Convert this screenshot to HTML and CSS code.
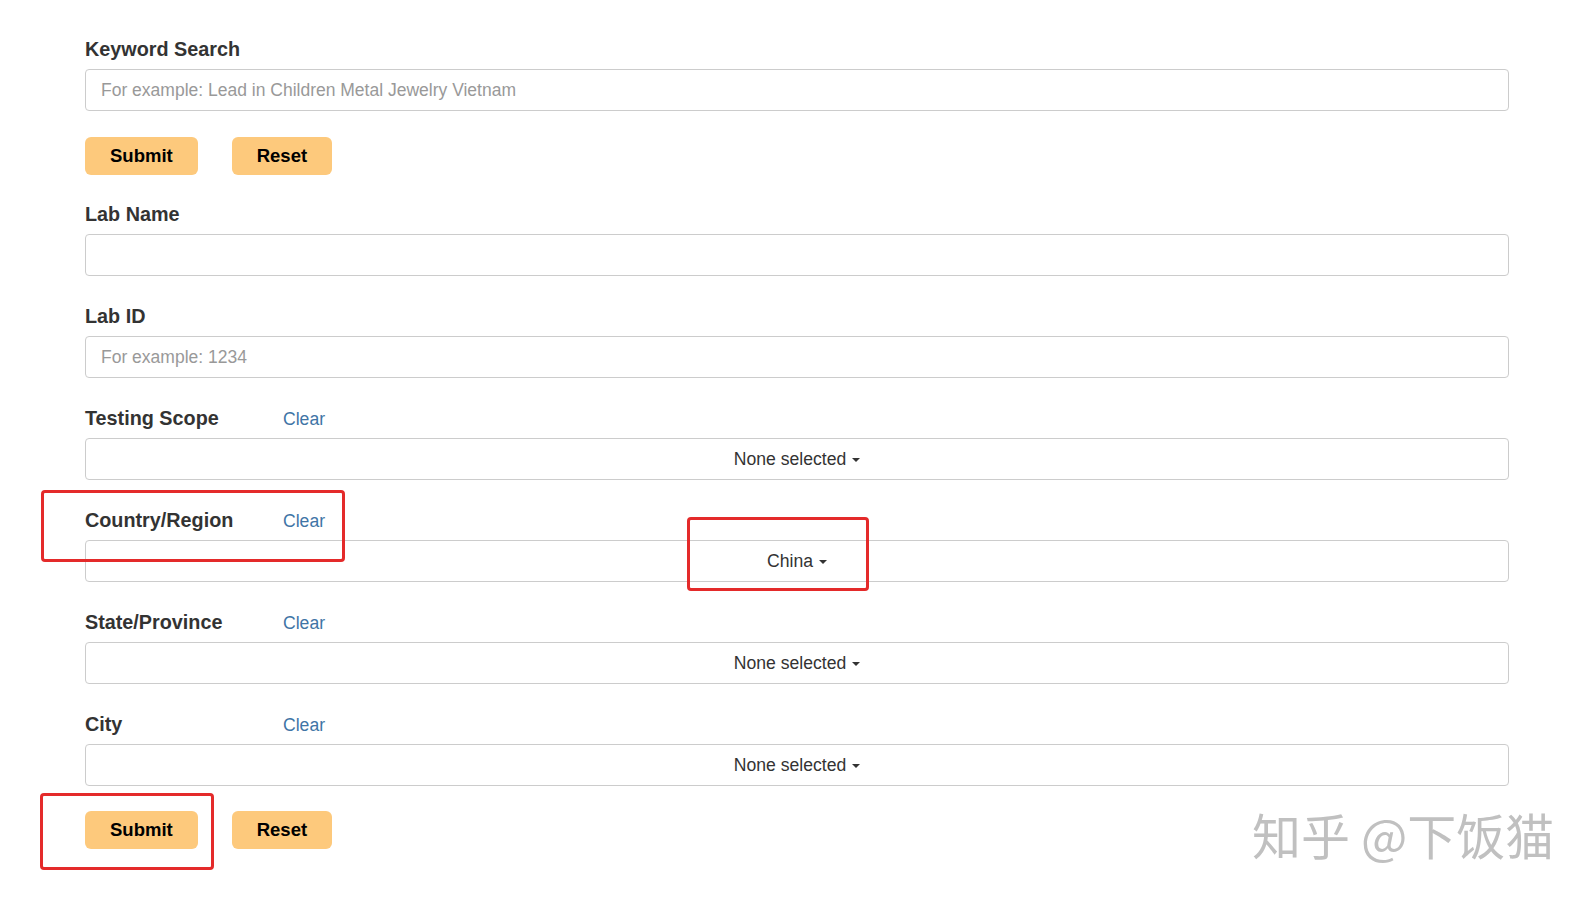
FILE: index.html
```html
<!DOCTYPE html>
<html>
<head>
    <title>Lab Search</title>
    <link rel="stylesheet" href="styles.css">
</head>
<body>
    <div class="page">
        <form class="search-form">
            <div class="group group-tight">
                <div class="label-row"><label>Keyword Search</label></div>
                <input class="field" type="text" placeholder="For example: Lead in Children Metal Jewelry Vietnam">
            </div>
            <div class="actions">
                <button type="button" class="btn-orange">Submit</button>
                <button type="button" class="btn-orange">Reset</button>
            </div>
            <div class="group">
                <div class="label-row"><label>Lab Name</label></div>
                <input class="field" type="text">
            </div>
            <div class="group">
                <div class="label-row"><label>Lab ID</label></div>
                <input class="field" type="text" placeholder="For example: 1234">
            </div>
            <div class="group">
                <div class="label-row"><label>Testing Scope</label><a class="clear" href="#">Clear</a></div>
                <button type="button" class="multiselect">None selected <b class="caret"></b></button>
            </div>
            <div class="group">
                <div class="label-row"><label>Country/Region</label><a class="clear" href="#">Clear</a></div>
                <button type="button" class="multiselect">China <b class="caret"></b></button>
            </div>
            <div class="group">
                <div class="label-row"><label>State/Province</label><a class="clear" href="#">Clear</a></div>
                <button type="button" class="multiselect">None selected <b class="caret"></b></button>
            </div>
            <div class="group group-last">
                <div class="label-row"><label>City</label><a class="clear" href="#">Clear</a></div>
                <button type="button" class="multiselect">None selected <b class="caret"></b></button>
            </div>
            <div class="actions">
                <button type="button" class="btn-orange">Submit</button>
                <button type="button" class="btn-orange">Reset</button>
            </div>
        </form>

        <div class="mark mark-country"></div>
        <div class="mark mark-china"></div>
        <div class="mark mark-submit"></div>
        <div class="watermark">知乎 @下饭猫</div>
    </div>
</body>
</html>
```

FILE: styles.css
```css
body {
    margin: 0;
    padding: 0;
    background-color: #ffffff;
    font-family: "Liberation Sans", Arial, sans-serif;
    color: #333333;
}
.page {
    position: relative;
    width: 1590px;
    height: 900px;
    overflow: hidden;
}
.search-form {
    width: 1424px;
    padding: 36px 0 0 85px;
}
.group {
    margin-bottom: 27px;
}
.group-tight {
    margin-bottom: 26px;
}
.group-last {
    margin-bottom: 25px;
}
.label-row {
    display: flex;
    align-items: baseline;
    height: 26px;
    margin-bottom: 7px;
}
.label-row label {
    width: 198px;
    font-size: 19.8px;
    line-height: 26px;
    font-weight: bold;
    color: #333333;
}
.clear {
    font-size: 17.6px;
    line-height: 26px;
    color: #3f75a6;
    text-decoration: none;
}
.field {
    display: block;
    box-sizing: border-box;
    width: 100%;
    height: 42px;
    padding: 0 15px;
    border: 1px solid #cccccc;
    border-radius: 4px;
    font-family: inherit;
    font-size: 17.5px;
    color: #555555;
    background: #ffffff;
}
.field::placeholder {
    color: #999999;
}
.multiselect {
    display: block;
    box-sizing: border-box;
    width: 100%;
    height: 42px;
    border: 1px solid #cccccc;
    border-radius: 4px;
    background: #ffffff;
    font-family: inherit;
    font-size: 17.6px;
    color: #333333;
    text-align: center;
    padding: 0 12px;
}
.caret {
    display: inline-block;
    width: 0;
    height: 0;
    margin-left: 1px;
    vertical-align: middle;
    border-top: 4px solid #333333;
    border-left: 4px solid transparent;
    border-right: 4px solid transparent;
}
.actions {
    display: flex;
    gap: 34px;
    margin-bottom: 26px;
}
.btn-orange {
    height: 38px;
    padding: 0 25px;
    border: none;
    border-radius: 6px;
    background-color: #fdc97c;
    font-family: inherit;
    font-size: 18.5px;
    font-weight: bold;
    color: #000000;
}
.mark {
    position: absolute;
    box-sizing: border-box;
    border: 3px solid #e42a2a;
    border-radius: 4px;
}
.mark-country {
    left: 41px;
    top: 490px;
    width: 304px;
    height: 72px;
}
.mark-china {
    left: 687px;
    top: 517px;
    width: 182px;
    height: 74px;
}
.mark-submit {
    left: 40px;
    top: 793px;
    width: 174px;
    height: 77px;
}
.watermark {
    position: absolute;
    left: 1252px;
    top: 809px;
    font-family: "Noto Sans CJK SC", sans-serif;
    font-size: 49px;
    line-height: 1;
    color: #c0c0c0;
    white-space: nowrap;
}
```
